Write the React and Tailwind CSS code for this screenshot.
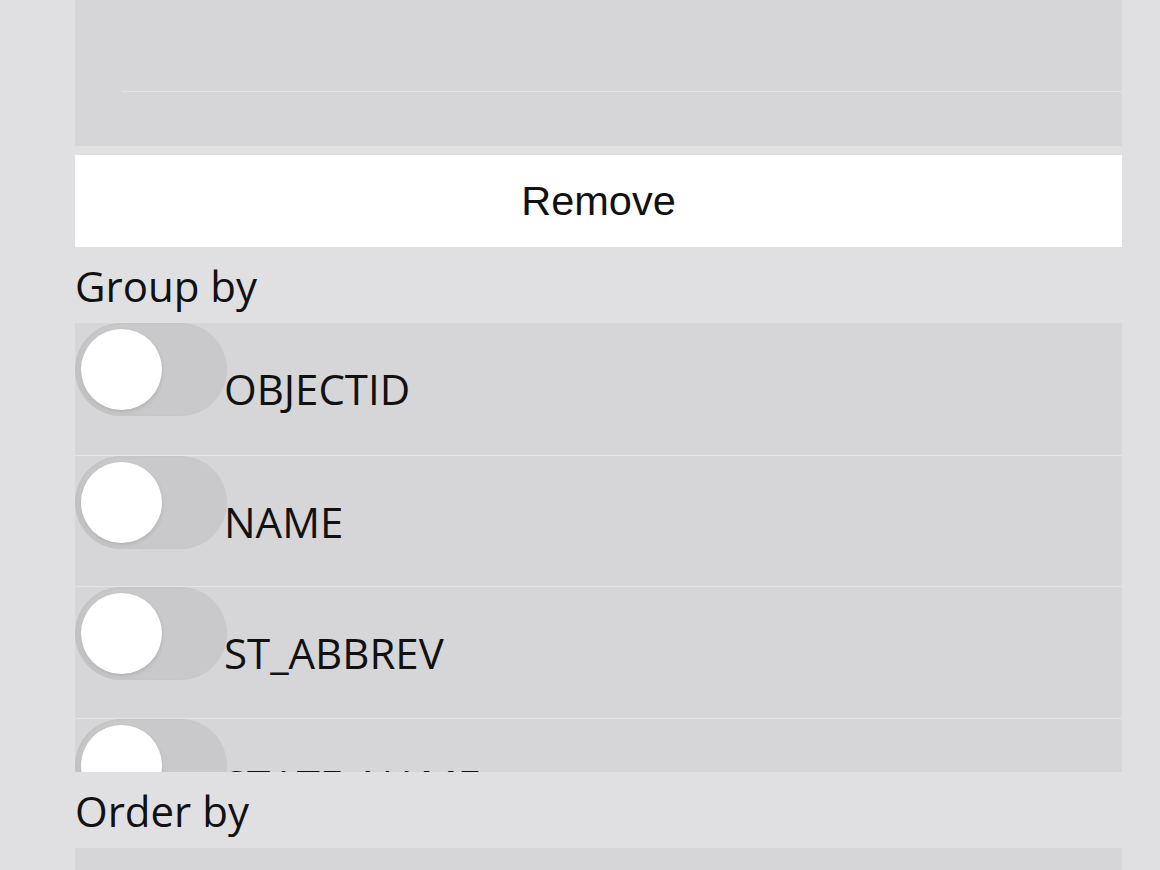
import React, { useState } from "react";

const FIELDS = ["OBJECTID", "NAME", "ST_ABBREV", "STATE_NAME"];

function Toggle({ on, onChange }) {
  return (
    <button
      onClick={onChange}
      className={`relative shrink-0 w-[152px] h-[93px] rounded-full ${on ? "bg-[#4cd964]" : "bg-[#c9c8cb]"} shadow-[inset_3px_0_3px_rgba(0,0,0,0.04)]`}
    >
      <span
        className={`absolute top-[6px] ${on ? "left-[65px]" : "left-[6px]"} w-[81px] h-[81px] rounded-full bg-white shadow-[0_2px_4px_rgba(0,0,0,0.12)]`}
      />
    </button>
  );
}

export default function App() {
  const [groups, setGroups] = useState({});
  const flip = (f) => setGroups((g) => ({ ...g, [f]: !g[f] }));

  return (
    <div
      className="w-[1160px] h-[870px] overflow-hidden bg-[#e0dfe2] text-[#111]"
      style={{ fontFamily: '"Open Sans", "Noto Sans", sans-serif' }}
    >
      <div className="mx-[75px] w-[1047px]">
        {/* top panel, partially scrolled out */}
        <div className="bg-[#d6d5d8] h-[146px]">
          <div className="h-[91px]" />
          <div className="ml-[47px] border-t border-[#e3e2e5]" />
        </div>

        <button className="mt-[9px] w-full h-[92px] bg-white flex items-center justify-center">
          <span className="text-[41.5px] leading-none" style={{ fontFamily: '"Liberation Sans", Arial, sans-serif' }}>
            Remove
          </span>
        </button>

        <div className="h-[76px] pt-[10px] text-[42px] leading-[57px]">Group by</div>

        <div className="h-[449px] overflow-hidden bg-[#d6d5d8]">
          {FIELDS.map((f, i) => (
            <div key={f} className={`flex items-start h-[131.5px] ${i > 0 ? "border-t border-[#e3e2e5]" : ""}`}>
              <Toggle on={!!groups[f]} onChange={() => flip(f)} />
              <span className="-ml-[3px] mt-[37px] text-[42px] leading-[57px]">{f}</span>
            </div>
          ))}
        </div>

        <div className="h-[76px] pt-[10px] text-[42px] leading-[57px]">Order by</div>

        <div className="h-[120px] bg-[#d6d5d8]" />
      </div>
    </div>
  );
}
